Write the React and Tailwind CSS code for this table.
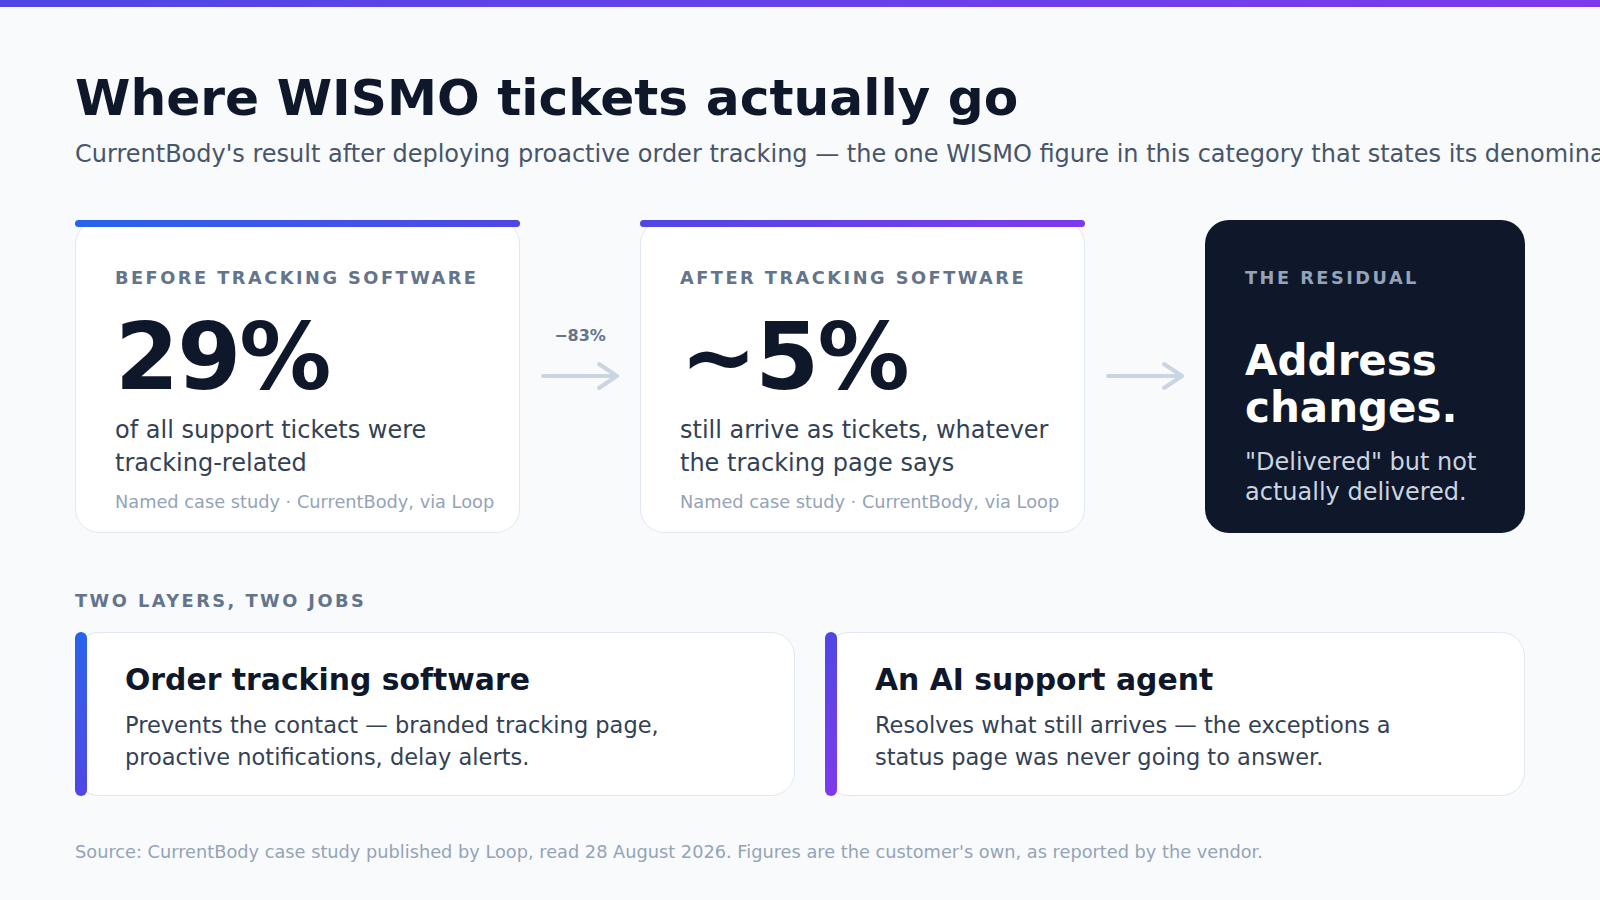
import React from "react";

function Arrow({ label }) {
  return (
    <div className="flex items-center justify-center pb-[2px]">
      <div className="relative">
        {label && (
          <div className="absolute bottom-full left-1/2 -translate-x-1/2 mb-[16px] whitespace-nowrap text-[16px] leading-[19px] font-bold text-[#64748b]">
            {label}
          </div>
        )}
        <svg width="80" height="30" viewBox="0 0 80 30" fill="none">
          <line x1="3" y1="15" x2="77" y2="15" stroke="#cbd5e1" strokeWidth="4" strokeLinecap="round" />
          <polyline points="59,3 77,15 59,27" stroke="#cbd5e1" strokeWidth="4" strokeLinecap="round" strokeLinejoin="round" fill="none" />
        </svg>
      </div>
    </div>
  );
}

function StatCard({ bar, label, value, desc, source }) {
  return (
    <div className="relative rounded-3xl border border-[#e2e8f0] bg-white pl-[39px] pr-6 pt-[47px] pb-[18px]">
      <div className={`absolute -left-px -right-px -top-px h-[7px] rounded-full ${bar}`} />
      <div className="text-[17.75px] leading-[21px] font-bold tracking-[0.14em] uppercase text-[#64748b]">{label}</div>
      <div className="mt-[23px] text-[92px] leading-[92px] font-bold tracking-[-0.02em] text-[#0f172a]">{value}</div>
      <div className="mt-[10px] text-[24px] leading-[33px] text-[#334155]">{desc}</div>
      <div className="mt-[10px] text-[17.75px] leading-[24px] text-[#94a3b8]">{source}</div>
    </div>
  );
}

function LayerCard({ accent, title, desc }) {
  return (
    <div className="relative rounded-3xl border border-[#e2e8f0] bg-white pl-[49px] pr-6 pt-[29px] pb-[22px]">
      <div className={`absolute -left-px -top-px -bottom-px w-[12px] rounded-full ${accent}`} />
      <div className="text-[29.85px] leading-[36px] font-bold text-[#0f172a]">{title}</div>
      <div className="mt-[11px] max-w-[570px] text-[22.5px] leading-[32px] text-[#334155]">{desc}</div>
    </div>
  );
}

export default function App() {
  return (
    <div className="min-h-screen w-full overflow-hidden bg-[#f8fafc] font-['DejaVu_Sans',sans-serif]">
      <div className="h-[7px] bg-linear-to-r from-[#4f46e5] to-[#7c3aed]" />
      <div className="px-[75px] pt-[63px]">
        <h1 className="text-[50.25px] leading-[55px] font-bold text-[#0f172a]">Where WISMO tickets actually go</h1>
        <p className="mt-[12px] whitespace-nowrap text-[24px] leading-[34px] text-[#475569]">
          CurrentBody's result after deploying proactive order tracking — the one WISMO figure in this category that states its denominator.
        </p>

        <div className="mt-[49px] grid grid-cols-[445px_120px_445px_120px_320px]">
          <StatCard
            bar="bg-linear-to-r from-[#2563eb] to-[#4f46e5]"
            label="Before tracking software"
            value="29%"
            desc="of all support tickets were tracking-related"
            source="Named case study · CurrentBody, via Loop"
          />
          <Arrow label="−83%" />
          <StatCard
            bar="bg-linear-to-r from-[#4f46e5] to-[#7c3aed]"
            label="After tracking software"
            value="~5%"
            desc="still arrive as tickets, whatever the tracking page says"
            source="Named case study · CurrentBody, via Loop"
          />
          <Arrow />
          <div className="rounded-3xl bg-[#0f172a] pl-10 pr-6 pt-[48px] pb-[25px]">
            <div className="text-[17.75px] leading-[21px] font-bold tracking-[0.14em] uppercase text-[#94a3b8]">The residual</div>
            <div className="mt-[48px] text-[42px] leading-[47px] font-bold text-white">Address changes.</div>
            <div className="mt-[16px] text-[24px] leading-[30px] text-[#cbd5e1]">"Delivered" but not actually delivered.</div>
          </div>
        </div>

        <div className="mt-[58px] text-[17.75px] leading-[21px] font-bold tracking-[0.14em] uppercase text-[#64748b]">Two layers, two jobs</div>

        <div className="mt-[20px] grid grid-cols-[720px_700px] gap-[30px]">
          <LayerCard
            accent="bg-linear-to-b from-[#2563eb] to-[#4f46e5]"
            title="Order tracking software"
            desc="Prevents the contact — branded tracking page, proactive notifications, delay alerts."
          />
          <LayerCard
            accent="bg-linear-to-b from-[#4f46e5] to-[#7c3aed]"
            title="An AI support agent"
            desc="Resolves what still arrives — the exceptions a status page was never going to answer."
          />
        </div>

        <div className="mt-[44px] text-[17.75px] leading-[24px] text-[#94a3b8]">
          Source: CurrentBody case study published by Loop, read 28 August 2026. Figures are the customer's own, as reported by the vendor.
        </div>
      </div>
    </div>
  );
}
